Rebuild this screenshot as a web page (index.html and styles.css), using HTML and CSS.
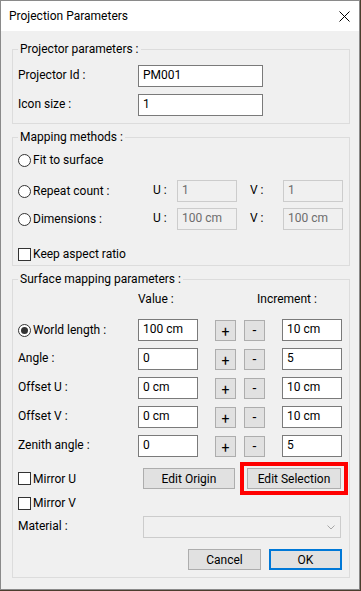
FILE: index.html
```html
<!DOCTYPE html>
<html lang="en">
<head>
    <meta charset="UTF-8">
    <meta name="viewport" content="width=device-width, initial-scale=1.0">
    <title>Projection Parameters</title>
    <link rel="stylesheet" href="styles.css">
</head>
<body>
    <div class="window">
        <div class="titlebar">
            <span class="title">Projection Parameters</span>
            <svg class="close" width="11" height="11" viewBox="0 0 11 11">
                <path d="M0.5 0.5 L10.5 10.5 M10.5 0.5 L0.5 10.5" stroke="#000" stroke-width="1" fill="none"/>
            </svg>
        </div>

        <div class="dialog">
            <!-- Projector -->
            <fieldset class="group group-projector">
                <legend>Projector parameters :</legend>
                <div class="row">
                    <span class="label col-label">Projector Id :</span>
                    <div class="edit edit-long">PM001</div>
                </div>
                <div class="row row-next">
                    <span class="label col-label">Icon size :</span>
                    <div class="edit edit-long">1</div>
                </div>
            </fieldset>

            <!-- Mapping methods -->
            <fieldset class="group group-mapping">
                <legend>Mapping methods :</legend>
                <div class="row row-fit">
                    <span class="option"><span class="radio"></span>Fit to surface</span>
                </div>
                <div class="row row-repeat">
                    <span class="option col-option"><span class="radio"></span>Repeat count :</span>
                    <span class="label col-u">U :</span>
                    <div class="edit edit-short disabled">1</div>
                    <span class="label col-v">V :</span>
                    <div class="edit edit-short disabled">1</div>
                </div>
                <div class="row row-dims">
                    <span class="option col-option"><span class="radio"></span>Dimensions :</span>
                    <span class="label col-u">U :</span>
                    <div class="edit edit-short disabled">100 cm</div>
                    <span class="label col-v">V :</span>
                    <div class="edit edit-short disabled">100 cm</div>
                </div>
                <div class="row row-keep">
                    <span class="option"><span class="check"></span>Keep aspect ratio</span>
                </div>
            </fieldset>

            <!-- Surface mapping -->
            <fieldset class="group group-surface">
                <legend>Surface mapping parameters :</legend>
                <div class="row row-head">
                    <span class="col-label"></span>
                    <span class="label col-value">Value :</span>
                    <span class="label">Increment :</span>
                </div>
                <div class="row row-first">
                    <span class="option col-label"><span class="radio checked"></span>World length :</span>
                    <div class="edit edit-short">100 cm</div>
                    <button class="btn btn-step btn-plus">+</button>
                    <button class="btn btn-step btn-minus">-</button>
                    <div class="edit edit-short edit-inc">10 cm</div>
                </div>
                <div class="row row-next">
                    <span class="label col-label">Angle :</span>
                    <div class="edit edit-short">0</div>
                    <button class="btn btn-step btn-plus">+</button>
                    <button class="btn btn-step btn-minus">-</button>
                    <div class="edit edit-short edit-inc">5</div>
                </div>
                <div class="row row-next">
                    <span class="label col-label">Offset U :</span>
                    <div class="edit edit-short">0 cm</div>
                    <button class="btn btn-step btn-plus">+</button>
                    <button class="btn btn-step btn-minus">-</button>
                    <div class="edit edit-short edit-inc">10 cm</div>
                </div>
                <div class="row row-next">
                    <span class="label col-label">Offset V :</span>
                    <div class="edit edit-short">0 cm</div>
                    <button class="btn btn-step btn-plus">+</button>
                    <button class="btn btn-step btn-minus">-</button>
                    <div class="edit edit-short edit-inc">10 cm</div>
                </div>
                <div class="row row-next">
                    <span class="label col-label">Zenith angle :</span>
                    <div class="edit edit-short">0</div>
                    <button class="btn btn-step btn-plus">+</button>
                    <button class="btn btn-step btn-minus">-</button>
                    <div class="edit edit-short edit-inc">5</div>
                </div>
                <div class="row row-mirror-u">
                    <span class="option col-mirror"><span class="check"></span>Mirror U</span>
                    <button class="btn btn-origin">Edit Origin</button>
                    <span class="highlight"><button class="btn btn-selection">Edit Selection</button></span>
                </div>
                <div class="row row-mirror-v">
                    <span class="option"><span class="check"></span>Mirror V</span>
                </div>
                <div class="row row-material">
                    <span class="label col-mirror">Material :</span>
                    <div class="combo">
                        <svg class="chevron" width="8" height="5" viewBox="0 0 8 5">
                            <path d="M0.5 0.5 L4 4 L7.5 0.5" stroke="#a6a6a6" fill="none"/>
                        </svg>
                    </div>
                </div>
                <div class="row row-actions">
                    <button class="btn btn-action">Cancel</button>
                    <button class="btn btn-action btn-default">OK</button>
                </div>
            </fieldset>
        </div>
    </div>
</body>
</html>
```

FILE: styles.css
```css
body {
    margin: 0;
    background: #4b3d2e;
    font-family: Roboto, "Liberation Sans", sans-serif;
    font-size: 12px;
    color: #000;
}
.window {
    width: 358px;
    border: 1px solid #8a8a8a;
    background: #f0f0f0;
}
.titlebar {
    height: 30px;
    background: #fff;
    display: flex;
    align-items: center;
    justify-content: space-between;
    padding: 0 8px 0 8px;
}
.title {
    font-size: 12px;
}
.close {
    display: block;
    margin-right: 1px;
}
.dialog {
    padding: 11px 9px 11px 11px;
}
.group {
    margin: 0;
    border: 1px solid #dcdcdc;
    padding: 0 6px 7px 5px;
}
.group + .group {
    margin-top: 6px;
}
legend {
    padding: 0 2px;
    margin-left: 0;
    line-height: 15px;
}
.row {
    display: flex;
    align-items: center;
    height: 22px;
}
.row-next {
    margin-top: 7px;
}
.label {
    padding-bottom: 2px;
    white-space: nowrap;
}
.col-label {
    width: 120px;
    flex: none;
}
.edit {
    box-sizing: border-box;
    height: 22px;
    border: 1px solid #7a7a7a;
    background: #fff;
    padding: 2px 4px 0 4px;
    line-height: 15px;
    white-space: nowrap;
    overflow: hidden;
    flex: none;
}
.edit-long {
    width: 125px;
}
.edit-short {
    width: 60px;
}
.edit.disabled {
    border-color: #cccccc;
    background: #f0f0f0;
    color: #6d6d6d;
}
.option {
    display: flex;
    align-items: center;
    white-space: nowrap;
}
.radio,
.check {
    box-sizing: border-box;
    width: 13px;
    height: 13px;
    border: 1px solid #333;
    background: #fff;
    margin-right: 2px;
    flex: none;
    position: relative;
}
.radio {
    border-radius: 50%;
}
.radio.checked::after {
    content: "";
    position: absolute;
    left: 2px;
    top: 2px;
    width: 7px;
    height: 7px;
    border-radius: 50%;
    background: #333;
}

/* mapping methods */
.group-projector .row:first-of-type {
    margin-top: 8px;
}
.row-fit {
    margin-top: 4px;
}
.row-repeat {
    margin-top: 9px;
}
.row-dims {
    margin-top: 6px;
}
.row-keep {
    margin-top: 13px;
}
.group-mapping {
    padding-bottom: 0;
}
.col-option {
    width: 135px;
}
.col-u {
    width: 24px;
    flex: none;
}
.col-v {
    width: 33px;
    margin-left: 13px;
    flex: none;
}

/* surface mapping */
.row-head {
    height: 18px;
    margin-top: 4px;
}
.col-value {
    width: 119px;
}
.row-first {
    margin-top: 10px;
}
.btn {
    box-sizing: border-box;
    font-family: inherit;
    font-size: 12px;
    color: #000;
    background: #e1e1e1;
    border: 1px solid #adadad;
    padding: 0;
    margin: 0;
    flex: none;
}
.btn-step {
    width: 21px;
    height: 21px;
    font-size: 14px;
    line-height: 18px;
}
.btn-plus {
    margin-left: 17px;
    padding-top: 2px;
}
.btn-minus {
    margin-left: 8px;
}
.edit-inc {
    margin-left: 17px;
}
.row-mirror-u {
    height: 21px;
    margin-top: 11px;
}
.col-mirror {
    width: 125px;
    flex: none;
}
.btn-origin {
    width: 92px;
    height: 21px;
}
.highlight {
    display: block;
    border: 4px solid #ff0000;
    padding: 2px 3px 2px 3px;
    margin: -6px -7px -6px 5px;
}
.btn-selection {
    display: block;
    width: 94px;
    height: 21px;
}
.row-mirror-v {
    margin-top: 3px;
}
.row-material {
    margin-top: 2px;
}
.combo {
    box-sizing: border-box;
    width: 198px;
    height: 22px;
    border: 1px solid #cccccc;
    background: #f0f0f0;
    display: flex;
    align-items: center;
    justify-content: flex-end;
    padding-right: 5px;
}
.chevron {
    display: block;
}
.row-actions {
    height: 21px;
    margin-top: 11px;
    justify-content: flex-end;
    padding-right: 1px;
}
.btn-action {
    width: 73px;
    height: 21px;
}
.btn-action + .btn-action {
    margin-left: 8px;
}
.btn-default {
    border: 2px solid #0078d7;
}
```
